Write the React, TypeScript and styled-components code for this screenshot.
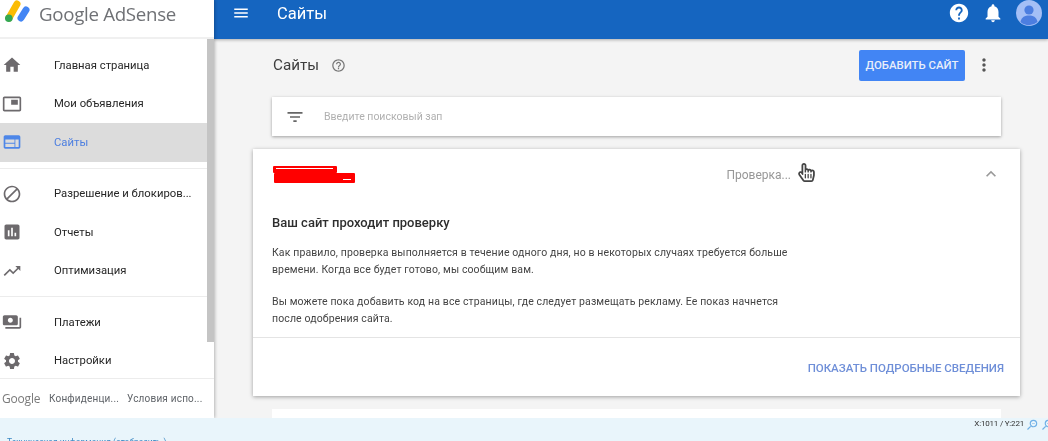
import React from 'react';
import styled, { createGlobalStyle } from 'styled-components';
import {
  MdAssessment, MdBlock, MdExpandLess, MdFilterList, MdHelp, MdHelpOutline, MdHome, MdMenu,
  MdMoreVert, MdNotifications, MdPictureInPicture, MdSettings, MdTrendingUp, MdWeb, MdPayments,
  MdOutlineZoomOut, MdOutlineZoomIn,
} from 'react-icons/md';
import { FaRegHandPointer } from 'react-icons/fa';

const GlobalStyle = createGlobalStyle`
  html, body { margin: 0; padding: 0; }
  body { font-family: Roboto, "Liberation Sans", sans-serif; background: #f4f4f4; }
  * { box-sizing: border-box; }
`;

const navSections = [
  [
    { icon: <MdHome />, label: 'Главная страница' },
    { icon: <MdPictureInPicture />, label: 'Мои объявления' },
    { icon: <MdWeb />, label: 'Сайты', active: true },
  ],
  [
    { icon: <MdBlock />, label: 'Разрешение и блокиров...' },
    { icon: <MdAssessment />, label: 'Отчеты' },
    { icon: <MdTrendingUp />, label: 'Оптимизация' },
  ],
  [
    { icon: <MdPayments />, label: 'Платежи' },
    { icon: <MdSettings />, label: 'Настройки' },
  ],
];

function AdsenseLogo() {
  return (
    <svg width="26" height="24" viewBox="0 0 26 24">
      <path d="M5 18 L13 4" stroke="#fbbc04" strokeWidth="7" strokeLinecap="round" />
      <path d="M17 18 L22 10" stroke="#4285f4" strokeWidth="7" strokeLinecap="round" />
      <circle cx="4.8" cy="18.2" r="3.8" fill="#34a853" />
    </svg>
  );
}

function Avatar() {
  return (
    <svg width="26" height="26" viewBox="0 0 26 26">
      <circle cx="13" cy="13" r="13" fill="#a4bff6" />
      <circle cx="13" cy="10" r="4.6" fill="#4c7ee0" />
      <path d="M4.5 22 C5.5 17 9 15.6 13 15.6 S20.5 17 21.5 22 A13 13 0 0 1 4.5 22 Z" fill="#4c7ee0" />
    </svg>
  );
}

export default function App() {
  return (
    <Page>
      <GlobalStyle />
      <Workspace>
        <Sidebar>
          <Brand>
            <AdsenseLogo />
            <BrandName>Google AdSense</BrandName>
          </Brand>
          <Nav>
            {navSections.map((section, i) => (
              <NavSection key={i}>
                {section.map((item) => (
                  <NavRow key={item.label} $active={item.active}>
                    <NavIcon $active={item.active}>{item.icon}</NavIcon>
                    {item.label}
                  </NavRow>
                ))}
              </NavSection>
            ))}
            <Scrollbar />
          </Nav>
          <SidebarFooter>
            <FooterLogo>Google</FooterLogo>
            <FooterLink>Конфиденци...</FooterLink>
            <FooterLink>Условия испо...</FooterLink>
          </SidebarFooter>
        </Sidebar>
        <Column>
          <TopBar>
            <MenuButton><MdMenu /></MenuButton>
            <TopTitle>Сайты</TopTitle>
            <TopActions>
              <MdHelp size={22} />
              <MdNotifications size={22} />
              <Avatar />
            </TopActions>
          </TopBar>
          <Content>
            <PageHead>
              <PageTitle>Сайты</PageTitle>
              <TitleHelp><MdHelpOutline /></TitleHelp>
              <AddButton>ДОБАВИТЬ САЙТ</AddButton>
              <MoreButton><MdMoreVert /></MoreButton>
            </PageHead>
            <SearchBar>
              <FilterIcon><MdFilterList /></FilterIcon>
              Введите поисковый зап
            </SearchBar>
            <SiteCard>
              <CardHead>
                <Redacted>
                  <RedactedTop />
                  <RedactedBottom />
                </Redacted>
                <Status>
                  Проверка...
                  <Cursor><FaRegHandPointer /></Cursor>
                </Status>
                <Chevron><MdExpandLess /></Chevron>
              </CardHead>
              <CardBody>
                <CardTitle>Ваш сайт проходит проверку</CardTitle>
                <Paragraph>
                  Как правило, проверка выполняется в течение одного дня, но в некоторых случаях требуется больше
                  времени. Когда все будет готово, мы сообщим вам.
                </Paragraph>
                <Paragraph>
                  Вы можете пока добавить код на все страницы, где следует размещать рекламу. Ее показ начнется
                  после одобрения сайта.
                </Paragraph>
              </CardBody>
              <CardActions>
                <DetailsLink>ПОКАЗАТЬ ПОДРОБНЫЕ СВЕДЕНИЯ</DetailsLink>
              </CardActions>
            </SiteCard>
            <NextCard />
          </Content>
        </Column>
      </Workspace>
      <StatusBar>
        <TechLink>Техническая информация (отобразить )</TechLink>
        <Coords>
          X:1011 / Y:221
          <MdOutlineZoomOut size={14} />
          <MdOutlineZoomIn size={14} />
        </Coords>
      </StatusBar>
    </Page>
  );
}

const Page = styled.div`
  width: 1048px;
  height: 441px;
  display: flex;
  flex-direction: column;
  overflow: hidden;
  filter: blur(0.3px);
`;

const Workspace = styled.div`
  height: 418px;
  display: flex;
  overflow: hidden;
`;

const Sidebar = styled.aside`
  width: 214px;
  flex: none;
  display: flex;
  flex-direction: column;
  background: #fff;
  box-shadow: 1px 0 3px rgba(0, 0, 0, 0.25);
  z-index: 1;
`;

const Brand = styled.div`
  height: 39px;
  flex: none;
  display: flex;
  align-items: flex-start;
  gap: 9px;
  padding-left: 4px;
  border-bottom: 2px solid #f0f0f0;
`;

const BrandName = styled.div`
  font-family: "Open Sans", Roboto, sans-serif;
  font-size: 18.7px;
  line-height: 28px;
  color: #6f7175;
  letter-spacing: -0.3px;
`;

const Nav = styled.nav`
  position: relative;
  flex: 1;
  padding-top: 1px;
  overflow: hidden;
`;

const NavSection = styled.div`
  padding: 6px 0;
  border-bottom: 1px solid #ececec;
  &:last-of-type { border-bottom: 0; }
`;

const NavRow = styled.div<{ $active?: boolean }>`
  height: 38.5px;
  display: flex;
  align-items: center;
  font-size: 11.3px;
  white-space: nowrap;
  color: ${(p) => (p.$active ? '#4d7fe0' : '#262626')};
  background: ${(p) => (p.$active ? '#dcdcdc' : 'transparent')};
`;

const NavIcon = styled.span<{ $active?: boolean }>`
  width: 54px;
  flex: none;
  display: flex;
  padding-left: 2px;
  font-size: 20px;
  color: ${(p) => (p.$active ? '#4d86e8' : '#6d6a6d')};
`;

const Scrollbar = styled.div`
  position: absolute;
  top: 0;
  right: 0;
  width: 7px;
  height: 303px;
  background: #c4c4c4;
`;

const SidebarFooter = styled.div`
  height: 40px;
  flex: none;
  display: flex;
  align-items: center;
  padding-left: 2px;
  font-size: 10px;
  letter-spacing: 0.2px;
  color: #5f6368;
  border-top: 1px solid #ececec;
  white-space: nowrap;
`;

const FooterLogo = styled.span`
  width: 47px;
  font-family: "Open Sans", sans-serif;
  font-size: 12px;
  letter-spacing: -0.2px;
  color: #7a7a7a;
`;

const FooterLink = styled.span`
  width: 78px;
`;

const Column = styled.div`
  flex: 1;
  min-width: 0;
  display: flex;
  flex-direction: column;
`;

const TopBar = styled.header`
  height: 39px;
  flex: none;
  display: flex;
  align-items: center;
  padding-bottom: 13px;
  background: #1565c0;
  color: #fff;
  box-shadow: 0 1px 3px rgba(0, 0, 0, 0.3);
`;

const MenuButton = styled.span`
  display: flex;
  margin-left: 18px;
  font-size: 18px;
`;

const TopTitle = styled.div`
  margin-left: 27px;
  margin-top: 1px;
  font-size: 16.5px;
`;

const TopActions = styled.div`
  margin-left: auto;
  display: flex;
  align-items: center;
  gap: 12px;
  padding-right: 6px;
`;

const Content = styled.main`
  flex: 1;
  display: flex;
  flex-direction: column;
  padding-left: 39px;
  overflow: hidden;
`;

const PageHead = styled.div`
  height: 52px;
  flex: none;
  display: flex;
  align-items: center;
  margin-bottom: 6px;
  padding-left: 20px;
  width: 741px;
`;

const PageTitle = styled.h1`
  margin: 0;
  font-size: 15.2px;
  font-weight: 400;
  color: #3c3c3c;
`;

const TitleHelp = styled.span`
  display: flex;
  margin-left: 12px;
  font-size: 15px;
  color: #777;
`;

const AddButton = styled.button`
  margin-left: auto;
  width: 106px;
  height: 31px;
  border: 0;
  border-radius: 2px;
  background: #4285f4;
  color: #e8eefa;
  font-family: inherit;
  font-size: 11.4px;
  font-weight: 500;
  white-space: nowrap;
  padding: 0;
`;

const MoreButton = styled.span`
  display: flex;
  margin-left: 9px;
  font-size: 20px;
  color: #555;
`;

const SearchBar = styled.div`
  flex: none;
  height: 39px;
  width: 729px;
  margin: 0 0 13px 19px;
  display: flex;
  align-items: center;
  background: #fff;
  box-shadow: 0 1px 3px rgba(0, 0, 0, 0.35);
  font-size: 10.5px;
  color: #b0b0b0;
`;

const FilterIcon = styled.span`
  display: flex;
  margin: 0 19px 0 13px;
  font-size: 20px;
  color: #666;
`;

const SiteCard = styled.section`
  flex: none;
  width: 767px;
  height: 247px;
  display: flex;
  flex-direction: column;
  background: #fff;
  box-shadow: 0 1px 4px rgba(0, 0, 0, 0.35);
`;

const CardHead = styled.div`
  position: relative;
  height: 52px;
  flex: none;
  display: flex;
  align-items: center;
  padding: 0 19px;
`;

const Redacted = styled.div`
  display: flex;
  flex-direction: column;
  margin-top: -1px;
  margin-left: 1px;
`;

const RedactedTop = styled.div`
  position: relative;
  width: 64px;
  height: 7px;
  background: #f00;
  border-radius: 1px;

  &::after {
    content: '';
    position: absolute;
    left: 3px;
    right: 4px;
    top: 2px;
    height: 1px;
    background: #fff;
  }
`;

const RedactedBottom = styled.div`
  position: relative;
  width: 81px;
  height: 10px;
  margin-left: 1px;
  background: #f00;
  border-radius: 1px;

  &::after {
    content: '';
    position: absolute;
    left: 69px;
    width: 8px;
    top: 6px;
    height: 1px;
    background: #fff;
  }
`;

const Status = styled.div`
  position: relative;
  margin-left: auto;
  margin-right: 210px;
  font-size: 12px;
  color: #979797;
`;

const Cursor = styled.span`
  position: absolute;
  left: 71px;
  top: -5px;
  display: flex;
  font-size: 19px;
  color: #444;
`;

const Chevron = styled.span`
  position: absolute;
  right: 19px;
  top: 15px;
  display: flex;
  font-size: 20px;
  color: #999;
`;

const CardBody = styled.div`
  flex: 1;
  padding: 14px 19px 0;
  border-bottom: 1px solid #e4e4e4;
`;

const CardTitle = styled.h2`
  margin: 0 0 14px;
  font-size: 13px;
  font-weight: 500;
  color: #2e2e2e;
`;

const Paragraph = styled.p`
  margin: 0 0 15px;
  width: 525px;
  font-size: 10.5px;
  letter-spacing: 0.12px;
  line-height: 17px;
  color: #444;

  &:last-child { margin-bottom: 0; }
`;

const CardActions = styled.div`
  height: 58px;
  flex: none;
  display: flex;
  align-items: center;
  justify-content: flex-end;
  padding: 1px 16px 0 0;
`;

const DetailsLink = styled.span`
  font-size: 11.5px;
  font-weight: 500;
  color: #6f8fd8;
`;

const NextCard = styled.div`
  flex: none;
  width: 729px;
  height: 20px;
  margin: 13px 0 0 19px;
  background: #fff;
`;

const StatusBar = styled.footer`
  height: 23px;
  flex: none;
  display: flex;
  justify-content: space-between;
  background: #e9f5fb;
  padding: 0 0 0 7px;
  overflow: hidden;
  z-index: 2;
`;

const TechLink = styled.span`
  margin-top: 19px;
  font-size: 8.5px;
  color: #3b88c3;
  white-space: nowrap;
`;

const Coords = styled.div`
  display: flex;
  align-items: flex-start;
  gap: 0;
  margin-right: -6px;
  line-height: 11px;
  font-size: 8px;
  letter-spacing: -0.2px;
  color: #333;

  & svg {
    color: #6fb0e6;
    transform: scaleX(-1);
    margin-left: 1px;
  }
`;
